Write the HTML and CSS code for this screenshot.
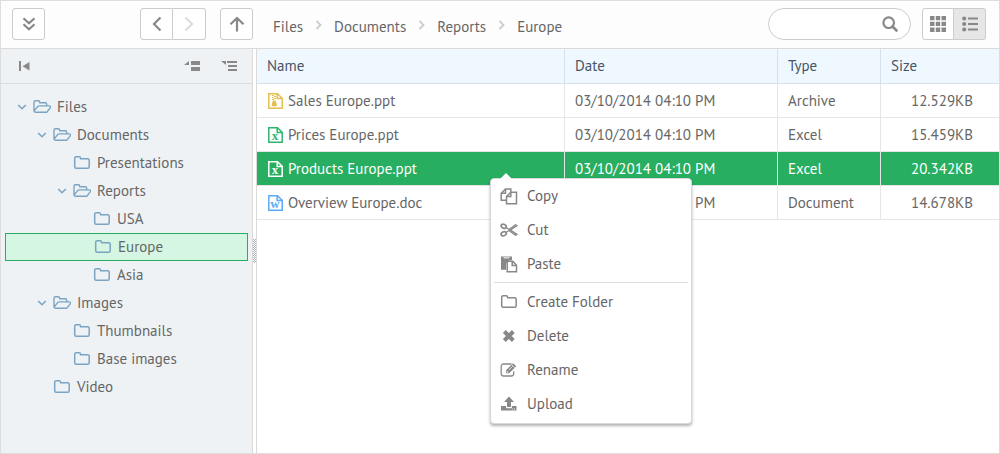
FILE: index.html
```html
<!DOCTYPE html>
<html lang="en">
<head>
<meta charset="utf-8">
<meta name="viewport" content="width=device-width, initial-scale=1">
<title>File manager</title>
<link rel="stylesheet" href="styles.css">
</head>
<body>
<svg class="sprite" aria-hidden="true">
  <symbol id="i-folder" viewBox="0 0 18 16"><path d="M1.700 3.200q0-1.500 1.500-1.500h2.900q1.500 0 1.500 1.500v.5h7q1.600 0 1.600 1.600v6.500q0 1.500-1.500 1.500H3.200q-1.500 0-1.500-1.500z" fill="none" stroke="currentColor" stroke-width="1.500"/></symbol>
  <symbol id="i-open" viewBox="0 0 18 16"><path d="M1 12V3.200q0-1.500 1.500-1.500h2.700q1.500 0 1.500 1.500v.5h5.500q1.500 0 1.500 1.500v1.600M1 12q.4 1.300 1.700 1.300h10.200q.8 0 1.300-.6l3-3.800q1.100-1.800-.9-2H6.200q-.9 0-1.500.7z" fill="none" stroke="currentColor" stroke-width="1.400" stroke-linejoin="round"/></symbol>
  <symbol id="i-down" viewBox="0 0 10 8"><path d="M1.200 2l3.800 3.700L8.800 2" fill="none" stroke="currentColor" stroke-width="1.600"/></symbol>
  <symbol id="i-crumb" viewBox="0 0 7 10"><path d="M1.500 1l4 4-4 4" fill="none" stroke="currentColor" stroke-width="1.800"/></symbol>
  <symbol id="i-file" viewBox="0 0 15 16"><path d="M.8.8h8.700l4.700 4.500v9.900H.8zM9.200.8v4.800h5" fill="none" stroke="currentColor" stroke-width="1.500"/></symbol>
</svg>
<div class="app">
  <header class="toolbar">
    <div class="toolbar-side">
      <button class="btn" type="button" aria-label="Menu"><svg width="14" height="14"><path d="M1.500 1.200L7 6.200l5.500-5M1.500 7.200l5.500 5 5.500-5" fill="none" stroke="currentColor" stroke-width="2.200"/></svg></button>
      <div class="nav">
        <div class="group">
          <button class="btn" type="button" aria-label="Back"><svg width="10" height="16"><path d="M8.500 1.500L2 8l6.500 6.500" fill="none" stroke="currentColor" stroke-width="2.200"/></svg></button>
          <button class="btn" type="button" aria-label="Forward" disabled><svg width="10" height="16"><path d="M1.500 1.500L8 8l-6.500 6.500" fill="none" stroke="currentColor" stroke-width="2.200"/></svg></button>
        </div>
        <button class="btn" type="button" aria-label="Up"><svg width="16" height="16"><path d="M8 15.500V2M1.500 8.300L8 2l6.500 6.300" fill="none" stroke="currentColor" stroke-width="2.200"/></svg></button>
      </div>
    </div>
    <nav class="crumbs" aria-label="Path">
      <a href="#files">Files</a><svg width="7" height="10"><use href="#i-crumb"/></svg>
      <a href="#documents">Documents</a><svg width="7" height="10"><use href="#i-crumb"/></svg>
      <a href="#reports">Reports</a><svg width="7" height="10"><use href="#i-crumb"/></svg>
      <a href="#europe">Europe</a>
    </nav>
    <form class="search">
      <input type="text" aria-label="Search">
      <button type="submit" aria-label="Find"><svg width="16" height="16"><circle cx="6.700" cy="6.700" r="5.300" fill="none" stroke="currentColor" stroke-width="2.200"/><path d="M10.500 10.500l4 4" stroke="currentColor" stroke-width="2.600" stroke-linecap="round"/></svg></button>
    </form>
    <div class="group">
      <button class="btn view" type="button" aria-label="Grid view"><svg width="16" height="16" fill="currentColor"><path d="M0 0h4.500v4.300H0zM5.800 0h4.400v4.300H5.800zM11.500 0H16v4.300h-4.500zM0 5.800h4.500v4.300H0zM5.800 5.800h4.400v4.300H5.800zM11.500 5.800H16v4.300h-4.500zM0 11.500h4.500V16H0zM5.800 11.500h4.400V16H5.800zM11.500 11.500H16V16h-4.500z"/></svg></button>
      <button class="btn view active" type="button" aria-label="List view" aria-pressed="true"><svg width="16" height="16" fill="currentColor"><circle cx="2.200" cy="2.500" r="2.100"/><circle cx="2.200" cy="8" r="2.100"/><circle cx="2.200" cy="13.500" r="2.100"/><path d="M6 1.500h10v2H6zM6 7h10v2H6zM6 12.500h10v2H6z"/></svg></button>
    </div>
  </header>

  <div class="main">
    <aside class="sidebar">
      <div class="tree-tools">
        <button type="button" aria-label="Hide tree"><svg width="12" height="10" fill="currentColor"><path d="M1 0h2v10H1zM11.500 1v8.500L4.500 5.200z"/></svg></button>
        <button class="push" type="button" aria-label="Collapse all"><svg width="16" height="11" fill="currentColor"><path d="M5 0v4H0zM7 0h9v4H7zM7 6h9v4H7z"/></svg></button>
        <button type="button" aria-label="Expand all"><svg width="16" height="11" fill="currentColor"><path d="M0 0h5v4zM6 0h10v2H6zM7 4h9v2H7zM7 8h9v2H7z"/></svg></button>
      </div>
      <ul class="tree">
        <li><div class="node"><button type="button" aria-label="Toggle"><svg width="10" height="8"><use href="#i-down"/></svg></button><svg width="18" height="16"><use href="#i-open"/></svg><span>Files</span></div></li>
        <li><div class="node l1"><button type="button" aria-label="Toggle"><svg width="10" height="8"><use href="#i-down"/></svg></button><svg width="18" height="16"><use href="#i-open"/></svg><span>Documents</span></div></li>
        <li><div class="node leaf l2"><svg width="18" height="16"><use href="#i-folder"/></svg><span>Presentations</span></div></li>
        <li><div class="node l2"><button type="button" aria-label="Toggle"><svg width="10" height="8"><use href="#i-down"/></svg></button><svg width="18" height="16"><use href="#i-open"/></svg><span>Reports</span></div></li>
        <li><div class="node leaf l3"><svg width="18" height="16"><use href="#i-folder"/></svg><span>USA</span></div></li>
        <li><div class="node leaf l3 selected"><svg width="18" height="16"><use href="#i-folder"/></svg><span>Europe</span></div></li>
        <li><div class="node leaf l3"><svg width="18" height="16"><use href="#i-folder"/></svg><span>Asia</span></div></li>
        <li><div class="node l1"><button type="button" aria-label="Toggle"><svg width="10" height="8"><use href="#i-down"/></svg></button><svg width="18" height="16"><use href="#i-open"/></svg><span>Images</span></div></li>
        <li><div class="node leaf l2"><svg width="18" height="16"><use href="#i-folder"/></svg><span>Thumbnails</span></div></li>
        <li><div class="node leaf l2"><svg width="18" height="16"><use href="#i-folder"/></svg><span>Base images</span></div></li>
        <li><div class="node leaf l1"><svg width="18" height="16"><use href="#i-folder"/></svg><span>Video</span></div></li>
      </ul>
    </aside>
    <div class="splitter"><span class="grip"></span></div>
    <section class="content">
      <table class="files">
        <colgroup><col><col class="c-date"><col class="c-type"><col class="c-size"></colgroup>
        <thead><tr><th>Name</th><th>Date</th><th>Type</th><th>Size</th></tr></thead>
        <tbody>
          <tr><td><div class="name"><svg class="archive" width="15" height="16"><use href="#i-file"/><path d="M4 2h2v1H4zM6 3h2v1H6zM4 4h2v1H4zM6 5h2v1H6zM4 6h2v1H4zM5 7.500h2.500l1.300 3.500q.5 2.500-2.500 2.500T3.800 11z" fill="currentColor"/></svg>Sales Europe.ppt</div></td><td>03/10/2014 04:10 PM</td><td>Archive</td><td class="size">12.529KB</td></tr>
          <tr><td><div class="name"><svg class="excel" width="15" height="16"><use href="#i-file"/><text x="7" y="13" class="mark">x</text></svg>Prices Europe.ppt</div></td><td>03/10/2014 04:10 PM</td><td>Excel</td><td class="size">15.459KB</td></tr>
          <tr class="current"><td><div class="name"><svg width="15" height="16"><use href="#i-file"/><text x="7" y="13" class="mark">x</text></svg>Products Europe.ppt</div></td><td>03/10/2014 04:10 PM</td><td>Excel</td><td class="size">20.342KB</td></tr>
          <tr><td><div class="name"><svg class="word" width="15" height="16"><use href="#i-file"/><text x="7" y="13" class="mark">w</text></svg>Overview Europe.doc</div></td><td>03/10/2014 04:10 PM</td><td>Document</td><td class="size">14.678KB</td></tr>
        </tbody>
      </table>
      <div class="menu" role="menu">
        <button type="button" role="menuitem"><svg width="18" height="17" fill="none" stroke="currentColor" stroke-width="1.500"><path d="M6.500 12.200H1.200V5.200L5.500 1h5.300v3.500M5.500 1v4.200H1.200M6.500 8.500l4.300-4.200h5.700v11.500h-10zM10.800 4.300v4.200H6.500"/></svg>Copy</button>
        <button type="button" role="menuitem"><svg width="18" height="16" fill="none" stroke="currentColor"><ellipse cx="3.700" cy="4.200" rx="2.700" ry="1.900" transform="rotate(25 3.700 4.200)" stroke-width="1.700"/><ellipse cx="3.700" cy="11.800" rx="2.700" ry="1.900" transform="rotate(-25 3.700 11.800)" stroke-width="1.700"/><path d="M6 5.500l3 2 6.500-4.700 1.500.8-6.500 4.400L17 12.400l-1.500.8L9 8.500l-3 2" stroke-width="1.200"/></svg>Cut</button>
        <button type="button" role="menuitem"><svg width="18" height="17"><path d="M1 .5h11v3.700H9.500L6 7.500v6.200H1z" fill="currentColor"/><path d="M3.500 1.800h6" stroke="#fff"/><path d="M7.200 5.300h5.500l3.800 3.900v6.500H7.200zM12.200 5.300v4.200h4.300" fill="#fff" stroke="currentColor" stroke-width="1.500"/></svg>Paste</button>
        <hr>
        <button type="button" role="menuitem"><svg width="18" height="16"><use href="#i-folder"/></svg>Create Folder</button>
        <button type="button" role="menuitem"><svg width="18" height="16"><path d="M4.300 3.500l9 9M13.300 3.500l-9 9" stroke="currentColor" stroke-width="4"/></svg>Delete</button>
        <button type="button" role="menuitem"><svg width="18" height="16"><path d="M11.500 2H3.700Q1.200 2 1.200 4.500v7Q1.200 14 3.700 14h7.500q2.500 0 2.500-2.500V9.300" fill="none" stroke="currentColor" stroke-width="1.300"/><path d="M6 11.300V8.200L13 1.200l3.200 3.100-7 7z" fill="currentColor"/><path d="M11.700 2.800l2.900 2.900M7.200 9v1.200h1.200M8.800 8l3.500-3.500" stroke="#fff" stroke-width=".8" fill="none"/></svg>Rename</button>
        <button type="button" role="menuitem"><svg width="18" height="16" fill="currentColor"><path d="M9 .5L14 6h-3v5H7V6H4zM1 10h5v1q0 1.200 1.200 1.200h3.600Q12 12.200 12 11v-1h4.500v4.500H1z"/><path d="M11.800 13h1M14 13h1" stroke="#fff"/></svg>Upload</button>
      </div>
    </section>
  </div>
</div>
</body>
</html>
```
FILE: styles.css
```css
* { box-sizing: border-box; }

body {
  margin: 0;
  font: 15px/20px "PT Sans", "Open Sans", "Noto Sans", sans-serif;
  color: #666;
  background: #fff;
}

button, input { font: inherit; color: inherit; }
button { padding: 0; border: 0; background: none; cursor: pointer; }
svg { display: block; flex: none; }
.sprite { position: absolute; width: 0; height: 0; }

.app {
  display: flex;
  flex-direction: column;
  min-height: 100vh;
  border: 1px solid #ddd;
}

.toolbar {
  display: flex;
  align-items: center;
  padding: 7px 13px 8px 11px;
  border-bottom: 1px solid #dadada;
  background: #fdfdfd;
}
.toolbar-side {
  display: flex;
  justify-content: space-between;
  width: 241px;
}
.nav { display: flex; gap: 14px; }

.btn {
  display: flex;
  align-items: center;
  justify-content: center;
  width: 33px;
  height: 32px;
  border: 1px solid #ccc;
  border-radius: 3px;
  background: #fff;
  color: #888;
}
.btn:disabled { color: #ddd; }
.group { display: flex; }
.group .btn:first-child { border-radius: 3px 0 0 3px; }
.group .btn:last-child { border-left: 0; border-radius: 0 3px 3px 0; }
.view { width: 32px; }
.view.active { background: #e6e6e6; }

.crumbs {
  display: flex;
  flex: 1;
  align-items: center;
  gap: 12px;
  padding: 5px 0 0 20px;
}
.crumbs a { color: inherit; text-decoration: none; }
.crumbs svg { color: #ccc; margin-bottom: 4px; }

.search {
  display: flex;
  align-items: center;
  width: 143px;
  height: 32px;
  margin-right: 11px;
  padding: 0 12px 0 14px;
  border: 1px solid #ccc;
  border-radius: 16px;
  background: #fff;
}
.search input {
  flex: 1;
  min-width: 0;
  padding: 0;
  border: 0;
  outline: 0;
  background: none;
}
.search button { color: #888; }

.main { display: flex; flex: 1; }

.sidebar {
  width: 252px;
  border-right: 1px solid #dadada;
  background: #eef2f5;
}
.tree-tools {
  display: flex;
  align-items: center;
  gap: 21px;
  height: 35px;
  padding: 0 15px 0 17px;
  border-bottom: 1px solid #dadfe3;
  color: #888;
}
.push { margin-left: auto; }

.tree {
  margin: 0;
  padding: 9px 4px;
  list-style: none;
}
.node {
  display: flex;
  align-items: center;
  height: 28px;
  padding-left: 12px;
  border: 0 solid #27ae60;
}
.node button { margin-right: 6px; }
.node button, .node svg { color: #7ba4c4; }
.node span { margin-left: 6px; }
.l1 { padding-left: 32px; }
.l2 { padding-left: 52px; }
.leaf.l1 { padding-left: 48px; }
.leaf.l2 { padding-left: 68px; }
.leaf.l3 { padding-left: 88px; }
.node.selected { border-width: 1px; background: #d4f6e2; }

.splitter {
  display: flex;
  align-items: center;
  width: 4px;
  border-right: 1px solid #dadada;
  background: #fff;
}
.grip {
  width: 3px;
  height: 24px;
  background: repeating-conic-gradient(#fff 0 25%, #b5b5b5 0 50%) 0 0 / 2px 2px;
}

.content { position: relative; flex: 1; min-width: 0; }

.files {
  width: 100%;
  table-layout: fixed;
  border-collapse: separate;
  border-spacing: 0;
}
.c-date { width: 213px; }
.c-type { width: 103px; }
.c-size { width: 118px; }
.files th, .files td {
  height: 34px;
  padding: 0 10px;
  border: 0 solid #e6e6e6;
  border-width: 0 1px 1px 0;
  text-align: left;
  white-space: nowrap;
}
.files th {
  height: 35px;
  border-color: #d5e2ee;
  background: #f0f8ff;
  color: #475466;
  font-weight: 400;
}
.files th:last-child, .files td:last-child { border-right: 0; }
.files td.size { padding-right: 26px; text-align: right; }
.name { display: flex; align-items: center; gap: 5px; padding-left: 1px; }
.archive { color: #e3c04f; }
.excel { color: #2eb56f; }
.word { color: #5aabf5; }
.mark {
  fill: currentColor;
  font: bold 13px "Liberation Serif", serif;
  text-anchor: middle;
}
.files .current td { background: #27ae60; background-clip: padding-box; color: #fff; }

.menu {
  position: absolute;
  top: 129px;
  left: 233px;
  width: 202px;
  padding-bottom: 2px;
  border: 1px solid #d8d8d8;
  border-radius: 4px;
  background: #fff;
  box-shadow: 0 2px 3px rgba(0, 0, 0, .3);
}
.menu::before {
  content: "";
  position: absolute;
  top: -6px;
  left: 9px;
  border: 6px solid transparent;
  border-top: 0;
  border-bottom-color: #fff;
}
.menu button {
  display: flex;
  align-items: center;
  gap: 9px;
  width: 100%;
  height: 34px;
  padding-left: 9px;
}
.menu svg { color: #888; }
.menu hr {
  height: 1px;
  margin: 1px 3px 2px;
  border: 0;
  background: #ddd;
}
```
